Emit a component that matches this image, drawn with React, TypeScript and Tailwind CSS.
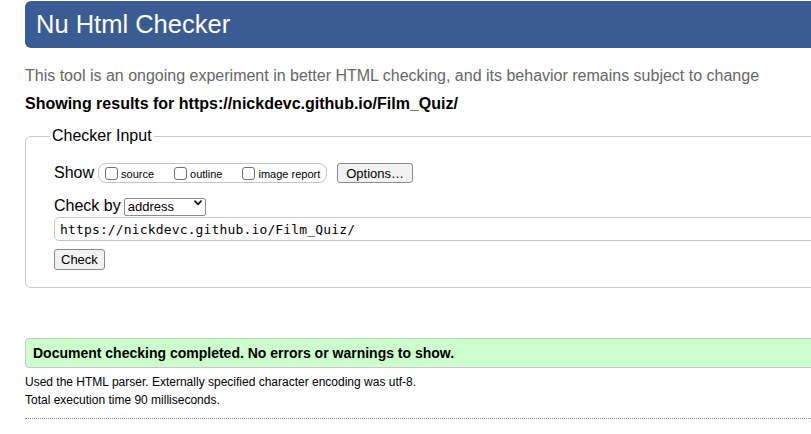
import { useState } from 'react';

export default function App() {
  const [show, setShow] = useState({ source: false, outline: false, images: false });
  const [checkBy, setCheckBy] = useState('address');
  const [doc, setDoc] = useState('https://nickdevc.github.io/Film_Quiz/');

  const boxes: { key: 'source' | 'outline' | 'images'; label: string }[] = [
    { key: 'source', label: 'source' },
    { key: 'outline', label: 'outline' },
    { key: 'images', label: 'image report' }
  ];

  return (
    <div className="w-[811px] h-[434px] overflow-hidden bg-white text-black font-['Liberation_Sans',Arial,sans-serif]">
      <div className="ml-[25px] w-[900px] pt-[1px]">
        {/* Title bar */}
        <h1 className="h-[47px] flex items-center pl-[11px] rounded-l-[6px] bg-[#3a5c92] text-white text-[25.5px] leading-none">
          Nu Html Checker
        </h1>

        <p className="mt-[19px] text-[16px] leading-[18px] text-[#666]">
          This tool is an ongoing experiment in better HTML checking, and its behavior remains subject to change
        </p>
        <p className="mt-[10px] text-[16px] leading-[18px] font-bold">
          Showing results for https://nickdevc.github.io/Film_Quiz/
        </p>

        {/* Checker input */}
        <fieldset className="mt-[14px] border border-[#c8c8c8] rounded-l-[6px] pl-[28px] pt-[18px] pb-[17px] pr-[20px]">
          <legend className="-ml-[4px] px-[2px] text-[16px] leading-[18px]">Checker Input</legend>

          <div className="flex items-center h-[20px]">
            <span className="text-[16px] leading-[18px] mr-[4px]">Show</span>
            <div className="flex items-center h-[20px] border border-[#c4c4c4] rounded-[8px] pl-[6px] pr-[6px] gap-[20px]">
              {boxes.map(b => (
                <label key={b.key} className="flex items-center text-[11px] leading-[13px]">
                  <input
                    type="checkbox"
                    checked={show[b.key]}
                    onChange={() => setShow(prev => ({ ...prev, [b.key]: !prev[b.key] }))}
                    className="appearance-none w-[13px] h-[13px] border border-[#6f6f6f] rounded-[3px] bg-white mr-[3px]"
                  />
                  <span className="pt-[2px]">{b.label}</span>
                </label>
              ))}
            </div>
            <button className="ml-[10px] h-[20px] px-[8px] border border-[#8a8a8a] rounded-[3px] bg-[#f2f2f2] text-[13px] leading-none">
              Options…
            </button>
          </div>

          <div className="mt-[14px] flex items-center h-[18px]">
            <span className="text-[16px] leading-[18px] mr-[3px]">Check by</span>
            <div className="relative">
              <select
                value={checkBy}
                onChange={e => setCheckBy(e.target.value)}
                className="appearance-none w-[82px] h-[18px] border border-[#8a8a8a] rounded-[2px] bg-white pl-[3px] text-[13px] leading-none outline-none"
              >
                <option value="address">address</option>
                <option value="file">file upload</option>
                <option value="text">text input</option>
              </select>
              <svg className="absolute right-[4px] top-[6px] pointer-events-none" width="8" height="6" viewBox="0 0 8 6">
                <path d="M1 1.2 L4 4.3 L7 1.2" fill="none" stroke="#111" strokeWidth="1.7" strokeLinecap="round" strokeLinejoin="round" />
              </svg>
            </div>
          </div>

          <input
            value={doc}
            onChange={e => setDoc(e.target.value)}
            className="mt-[2px] block w-full h-[24px] py-0 border border-[#c6c6c6] rounded-[5px] px-[5px] font-['DejaVu_Sans_Mono',monospace] text-[13px] tracking-[0.15px] leading-[22px] outline-none"
          />

          <button className="mt-[8px] block h-[21px] px-[6px] border border-[#8a8a8a] rounded-[3px] bg-[#f2f2f2] text-[13px] leading-none">
            Check
          </button>
        </fieldset>

        {/* Result */}
        <div className="mt-[50px] h-[30px] flex items-center pl-[7px] border border-[#c8c8c8] rounded-l-[4px] bg-[#ccffcc] text-[14px] font-bold">
          Document checking completed. No errors or warnings to show.
        </div>
        <p className="mt-[7px] text-[12px] leading-[14px]">
          Used the HTML parser. Externally specified character encoding was utf-8.
        </p>
        <p className="mt-[4px] text-[12px] leading-[14px]">Total execution time 90 milliseconds.</p>
        <div className="mt-[11px] border-b border-dotted border-[#888]" />
      </div>
    </div>
  );
}
